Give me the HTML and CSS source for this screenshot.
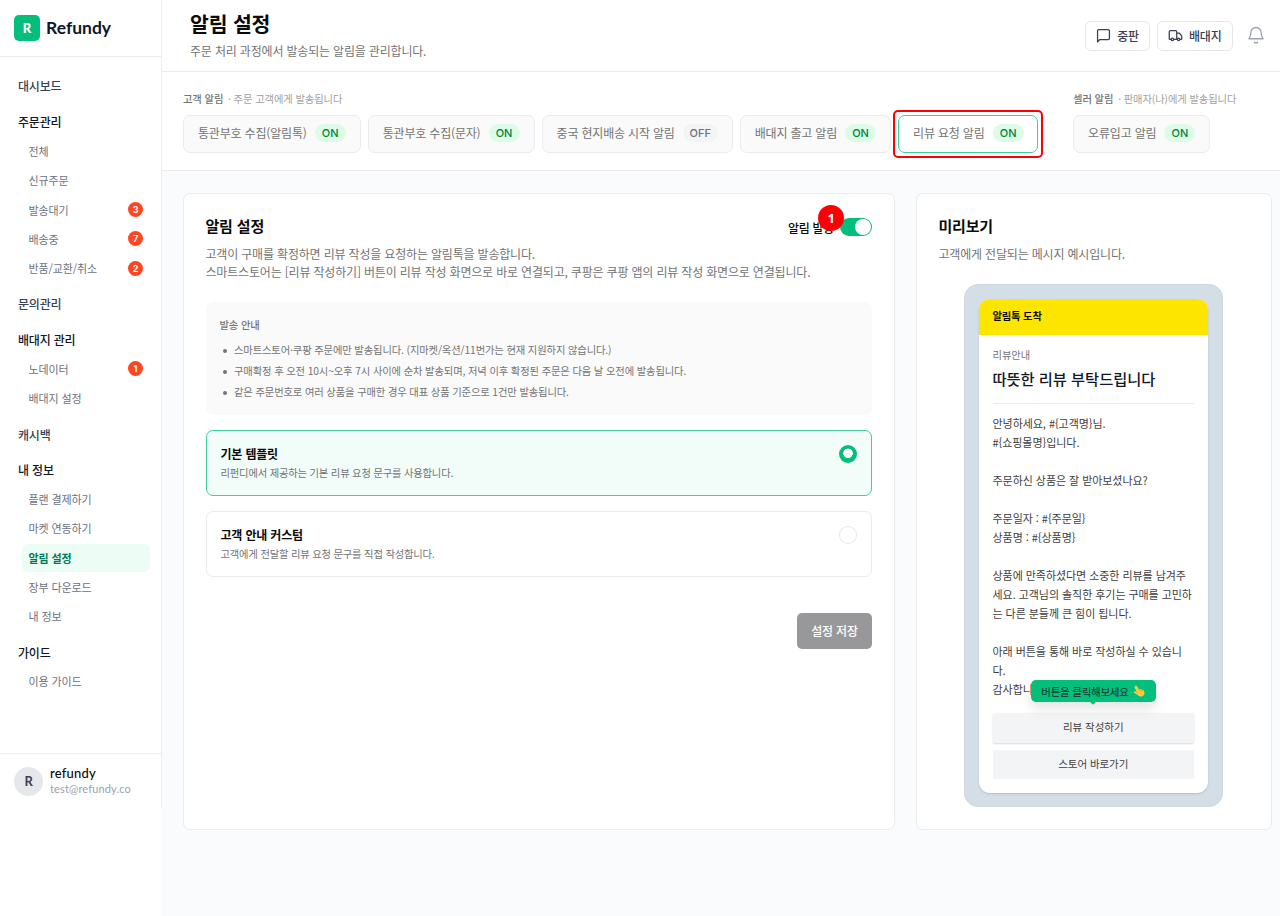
FILE: index.html
```html
<!DOCTYPE html>
<html lang="ko">

<head>
	<meta charset="UTF-8">
	<title>Refundy - 알림 설정</title>
	<link rel="stylesheet" href="styles.css">
</head>

<body>
	<aside class="sidebar">
		<div class="brand">
			<span class="brand-mark">R</span>
			<span class="brand-name">Refundy</span>
		</div>
		<nav class="menu">
			<a class="menu-title light">대시보드</a>
			<a class="menu-title">주문관리</a>
			<a class="menu-item">전체</a>
			<a class="menu-item">신규주문</a>
			<a class="menu-item">발송대기 <span class="count">3</span></a>
			<a class="menu-item">배송중 <span class="count">7</span></a>
			<a class="menu-item">반품/교환/취소 <span class="count">2</span></a>
			<a class="menu-title light">문의관리</a>
			<a class="menu-title">배대지 관리</a>
			<a class="menu-item">노데이터 <span class="count">1</span></a>
			<a class="menu-item">배대지 설정</a>
			<a class="menu-title light">캐시백</a>
			<a class="menu-title">내 정보</a>
			<a class="menu-item">플랜 결제하기</a>
			<a class="menu-item">마켓 연동하기</a>
			<a class="menu-item active">알림 설정</a>
			<a class="menu-item">장부 다운로드</a>
			<a class="menu-item">내 정보</a>
			<a class="menu-title">가이드</a>
			<a class="menu-item">이용 가이드</a>
		</nav>
		<div class="user">
			<span class="avatar">R</span>
			<div>
				<div class="user-name">refundy</div>
				<div class="user-mail">test@refundy.co</div>
			</div>
		</div>
	</aside>

	<main class="main">
		<header class="header">
			<div>
				<h1>알림 설정</h1>
				<p>주문 처리 과정에서 발송되는 알림을 관리합니다.</p>
			</div>
			<div class="actions">
				<button class="btn">
					<svg width="15" height="15" viewBox="0 0 24 24" fill="none" stroke="currentColor" stroke-width="2" stroke-linecap="round" stroke-linejoin="round"><path d="M2.5 22V4.5a2 2 0 0 1 2-2h15a2 2 0 0 1 2 2v12a2 2 0 0 1-2 2H6z"/></svg>
					중판
				</button>
				<button class="btn">
					<svg width="15" height="15" viewBox="0 0 24 24" fill="none" stroke="currentColor" stroke-width="2" stroke-linecap="round" stroke-linejoin="round"><path d="M14 18V6a2 2 0 0 0-2-2H4a2 2 0 0 0-2 2v11a1 1 0 0 0 1 1h2"/><path d="M15 18H9"/><path d="M19 18h2a1 1 0 0 0 1-1v-3.65a1 1 0 0 0-.22-.624l-3.48-4.35A1 1 0 0 0 17.52 8H14"/><circle cx="17" cy="18" r="2"/><circle cx="7" cy="18" r="2"/></svg>
					배대지
				</button>
				<svg class="bell" width="18" height="18" viewBox="0 0 24 24" fill="none" stroke="currentColor" stroke-width="1.7" stroke-linecap="round" stroke-linejoin="round"><path d="M12 2a6.800 6.800 0 0 0-6.800 6.800c0 5-1.200 6.700-2.700 8.200h19c-1.500-1.500-2.700-3.200-2.700-8.200A6.800 6.800 0 0 0 12 2z"/><path d="M10 21.500a2.200 2.200 0 0 0 4 0"/></svg>
			</div>
		</header>

		<section class="tabs">
			<div class="tab-group">
				<div class="tab-label"><b>고객 알림</b> · 주문 고객에게 발송됩니다</div>
				<div class="tab-row">
					<div class="tab">통관부호 수집(알림톡) <span class="state">ON</span></div>
					<div class="tab">통관부호 수집(문자) <span class="state">ON</span></div>
					<div class="tab">중국 현지배송 시작 알림 <span class="state off">OFF</span></div>
					<div class="tab">배대지 출고 알림 <span class="state">ON</span></div>
					<div class="tab selected">리뷰 요청 알림 <span class="state">ON</span></div>
				</div>
			</div>
			<div class="tab-group">
				<div class="tab-label"><b>셀러 알림</b> · 판매자(나)에게 발송됩니다</div>
				<div class="tab-row">
					<div class="tab">오류입고 알림 <span class="state">ON</span></div>
				</div>
			</div>
		</section>

		<div class="content">
			<section class="card settings">
				<div class="card-head">
					<h2>알림 설정</h2>
					<div class="send">
						알림 발송
						<span class="toggle"></span>
						<span class="step">1</span>
					</div>
				</div>
				<p class="desc">고객이 구매를 확정하면 리뷰 작성을 요청하는 알림톡을 발송합니다.<br>스마트스토어는 [리뷰 작성하기] 버튼이 리뷰 작성 화면으로 바로 연결되고, 쿠팡은 쿠팡 앱의 리뷰 작성 화면으로 연결됩니다.</p>

				<div class="notice">
					<h3>발송 안내</h3>
					<ul>
						<li>스마트스토어·쿠팡 주문에만 발송됩니다. (지마켓/옥션/11번가는 현재 지원하지 않습니다.)</li>
						<li>구매확정 후 오전 10시~오후 7시 사이에 순차 발송되며, 저녁 이후 확정된 주문은 다음 날 오전에 발송됩니다.</li>
						<li>같은 주문번호로 여러 상품을 구매한 경우 대표 상품 기준으로 1건만 발송됩니다.</li>
					</ul>
				</div>

				<div class="option checked">
					<div>
						<h4>기본 템플릿</h4>
						<p>리펀디에서 제공하는 기본 리뷰 요청 문구를 사용합니다.</p>
					</div>
					<span class="radio"></span>
				</div>
				<div class="option">
					<div>
						<h4>고객 안내 커스텀</h4>
						<p>고객에게 전달할 리뷰 요청 문구를 직접 작성합니다.</p>
					</div>
					<span class="radio"></span>
				</div>

				<button class="save">설정 저장</button>
			</section>

			<section class="card preview">
				<h2>미리보기</h2>
				<p class="desc">고객에게 전달되는 메시지 예시입니다.</p>
				<div class="phone">
					<div class="message">
						<div class="message-head">알림톡 도착</div>
						<div class="message-body">
							<div class="message-kind">리뷰안내</div>
							<div class="message-title">따뜻한 리뷰 부탁드립니다</div>
							<div class="message-text">안녕하세요, #{고객명}님.<br>#{쇼핑몰명}입니다.<br><br>주문하신 상품은 잘 받아보셨나요?<br><br>주문일자 : #{주문일}<br>상품명 : #{상품명}<br><br>상품에 만족하셨다면 소중한 리뷰를 남겨주<br>세요. 고객님의 솔직한 후기는 구매를 고민하<br>는 다른 분들께 큰 힘이 됩니다.<br><br>아래 버튼을 통해 바로 작성하실 수 있습니<br>다.<br>감사합니다.</div>
							<div class="message-btn raised">
								리뷰 작성하기
								<div class="tip">
									버튼을 클릭해보세요
									<svg width="12" height="12" viewBox="0 0 24 24"><path fill="#ffc83d" d="M4.500 2.200c1.300-1 2.900-.5 3.700.8l3.500 5.600c1.200-.9 2.700-.6 3.500.5 1.300-.8 2.700-.4 3.400.8 1.300-.5 2.600.1 3.100 1.300l1 3.700c.8 3.200-.8 6.200-3.700 7.500-3.200 1.400-6.300.8-8.300-1.300-2-1.600-4.800-3.800-7.800-5.100-2-1-1.500-3.600.8-3.700 1.200 0 2.400.4 3.500.9L3.700 5.800c-.8-1.300-.5-2.800.8-3.600z"/><path fill="none" stroke="#e58b1f" stroke-width="1.300" stroke-linecap="round" d="M11.700 8.600l1.800 3M15.200 9.100l1.600 2.900M18.600 9.900l1.300 2.500M7.200 13.200l1.900 3"/></svg>
								</div>
							</div>
							<div class="message-btn">스토어 바로가기</div>
						</div>
					</div>
				</div>
			</section>
		</div>
	</main>
</body>

</html>
```
FILE: styles.css
```css
* {
	box-sizing: border-box;
}

body {
	margin: 0;
	height: 916px;
	display: flex;
	overflow: hidden;
	background-color: #fff;
	color: #0a0a0a;
	font-family: "Noto Sans CJK KR", sans-serif;
	font-size: 12px;
	letter-spacing: -0.18px;
	white-space: nowrap;
}

h1, h2, h3, h4, p, ul {
	margin: 0;
	padding: 0;
}

/* sidebar */
.sidebar {
	width: 162px;
	height: 808px;
	flex-shrink: 0;
	display: flex;
	flex-direction: column;
	border-right: 1px solid #ebedef;
}

.brand {
	height: 57px;
	flex-shrink: 0;
	padding-left: 14px;
	display: flex;
	align-items: center;
	gap: 6px;
	border-bottom: 1px solid #e9ebee;
}

.brand-mark {
	width: 26px;
	height: 26px;
	border-radius: 5px;
	background-color: #04bf7b;
	color: #fff;
	font: 900 13px/26px Lato, sans-serif;
	text-align: center;
}

.brand-name {
	font: 700 17.500px/24px Lato, sans-serif;
	letter-spacing: 0;
	color: #0f172a;
}

.menu {
	flex: 1;
	padding: 7.700px 11px 0 18px;
}

.menu-title,
.menu-item {
	display: flex;
	align-items: center;
	height: 29.250px;
}

.menu-title {
	margin-top: 6.600px;
	font-weight: 500;
	color: #101828;
}

.menu-title.light {
	color: #364153;
}

.menu-item {
	justify-content: space-between;
	margin-left: 3.500px;
	padding: 0 7px;
	font-size: 11px;
	letter-spacing: -0.1px;
	color: #6a7282;
}

.menu-item.active {
	height: 28px;
	margin-top: .6px;
	margin-bottom: .7px;
	border-radius: 6px;
	background-color: #ecfdf5;
	color: #007a55;
	font-weight: 700;
}

.count {
	width: 15px;
	height: 15px;
	border-radius: 50%;
	background-color: #ff4521;
	color: #fff;
	font: 700 9px/15px "Inter", sans-serif;
	text-align: center;
}

.user {
	height: 55px;
	padding-left: 14px;
	display: flex;
	align-items: center;
	gap: 7px;
	border-top: 1px solid #e9ebee;
}

.avatar {
	width: 29px;
	height: 29px;
	border-radius: 50%;
	background-color: #e5e7eb;
	color: #364153;
	font: 700 13px/29px Lato, sans-serif;
	text-align: center;
}

.user-name {
	font: 500 13px/15px Lato, sans-serif;
	letter-spacing: 0.2px;
}

.user-mail {
	font: 400 11px/15px Lato, sans-serif;
	letter-spacing: 0.15px;
	color: #99a1af;
}

/* header */
.main {
	flex: 1;
	min-width: 0;
	background-color: #fafbfc;
}

.header {
	height: 72px;
	padding: 0 15.500px 0 28px;
	display: flex;
	justify-content: space-between;
	background-color: #fff;
	border-bottom: 1px solid #e9ebee;
}

.header h1 {
	margin-top: 8px;
	font-size: 20.500px;
	line-height: 30px;
	font-weight: 700;
}

.header p {
	margin-top: 4px;
	line-height: 18px;
	color: #737373;
}

.actions {
	display: flex;
	align-items: center;
	gap: 7px;
}

.btn {
	height: 30px;
	padding: 0 10px;
	display: flex;
	align-items: center;
	gap: 6px;
	border: 1px solid #e5e7eb;
	border-radius: 6px;
	background-color: #fff;
	color: #364153;
	font: 500 12px "Noto Sans CJK KR", sans-serif;
	letter-spacing: -0.18px;
}

.bell {
	margin: 0 0 2px 7px;
	color: #99a1af;
}

/* tabs */
.tabs {
	height: 99px;
	padding: 19px 0 0 21px;
	display: flex;
	gap: 35px;
	background-color: #fff;
	border-bottom: 1px solid #e9ebee;
}

.tab-label {
	height: 24px;
	font-size: 10.300px;
	letter-spacing: -0.1px;
	line-height: 16px;
	color: #a1a1a1;
}

.tab-label b {
	margin-right: 2px;
	font-weight: 500;
	color: #737373;
}

.tab-row {
	display: flex;
	gap: 7px;
}

.tab {
	position: relative;
	height: 37.500px;
	padding: 0 14px 2px;
	display: flex;
	align-items: center;
	gap: 8px;
	border: 1px solid #e9ebee;
	border-radius: 7px;
	background-color: #fafafa;
	color: #737373;
}

.state {
	width: 31px;
	height: 18px;
	border-radius: 9px;
	background-color: #dcfce7;
	color: #00803c;
	font: 500 11px/18px "Inter", sans-serif;
	letter-spacing: 0;
	text-align: center;
}

.state.off {
	width: 35px;
	background-color: #f3f4f6;
	color: #6a7282;
}

.tab.selected {
	padding-right: 13.500px;
	border-color: #3fcf9b;
	background-color: #fff;
}

/* callout frame round the selected tab */
.tab.selected::after {
	content: "";
	position: absolute;
	inset: -6px;
	border: 2px solid #fb0007;
	border-radius: 5px;
}

/* cards */
.content {
	padding: 22px 8px 0 21px;
	display: grid;
	grid-template-columns: 712px 356px;
	gap: 21px;
}

.card {
	height: 637px;
	padding: 20px 22px 21px 21.500px;
	border: 1px solid #e9ebee;
	border-radius: 7px;
	background-color: #fff;
}

.card h2 {
	font-size: 15px;
	line-height: 24px;
	font-weight: 700;
}

.card-head {
	display: flex;
	justify-content: space-between;
}

.send {
	position: relative;
	top: 1px;
	display: flex;
	align-items: center;
	gap: 6px;
	font-weight: 500;
	letter-spacing: -0.3px;
}

.toggle {
	width: 32px;
	height: 18px;
	padding: 1px;
	border-radius: 9px;
	background-color: #04bf7b;
}

.toggle::after {
	content: "";
	display: block;
	width: 16px;
	height: 16px;
	margin-left: auto;
	border-radius: 50%;
	background-color: #fff;
}

.step {
	position: absolute;
	top: -10px;
	right: 28px;
	width: 26px;
	height: 26px;
	border-radius: 50%;
	background-color: #fb0007;
	color: #fff;
	font: 700 13px/26px "Open Sans", sans-serif;
	text-align: center;
}

.desc {
	margin-top: 7px;
	line-height: 18px;
	color: #737373;
}

.notice {
	height: 113px;
	margin-top: 21px;
	padding: 14px;
	border-radius: 7px;
	background-color: #fafafa;
	font-size: 10.300px;
	color: #737373;
	letter-spacing: -0.13px;
}

.notice h3 {
	font-size: 10.300px;
	font-weight: 500;
	line-height: 17px;
}

.notice ul {
	margin-top: 6px;
	list-style: none;
}

.notice li {
	display: flex;
	align-items: center;
	gap: 7.500px;
	line-height: 21.200px;
}

.notice li::before {
	content: "";
	width: 4px;
	height: 4px;
	margin: 2px 0 0 3px;
	border-radius: 50%;
	background-color: #737373;
}

.option {
	height: 66px;
	margin-top: 15px;
	padding: 14px;
	display: flex;
	justify-content: space-between;
	border: 1px solid #e9ebee;
	border-radius: 7px;
}

.option h4 {
	font-size: 12px;
	font-weight: 700;
	line-height: 18px;
}

.option p {
	margin-top: 2px;
	font-size: 10.300px;
	line-height: 16px;
	color: #737373;
}

.option.checked {
	border-color: #3fcf9b;
	background-color: #f2fcf8;
}

.radio {
	width: 18px;
	height: 18px;
	border: 1px solid #e5e7eb;
	border-radius: 50%;
}

.checked .radio {
	border: none;
	background: radial-gradient(circle at 50% 46%, #fff 4.500px, #04bf7b 5px);
}

.save {
	display: block;
	width: 75px;
	height: 36px;
	margin: 36px 0 0 auto;
	padding: 0 0 2px;
	border: none;
	border-radius: 5px;
	background-color: #98989b;
	color: #fff;
	font: 500 12px "Noto Sans CJK KR", sans-serif;
	letter-spacing: -0.18px;
}

/* message preview */
.phone {
	width: 259px;
	height: 523px;
	margin: 21px 26px 0 auto;
	padding: 14px;
	border: 1px solid #cbd6e0;
	border-radius: 14px;
	background-color: #d4dee7;
}

.message {
	height: 494px;
	border-radius: 11px;
	background-color: #fff;
	box-shadow: 0 1px 2px rgba(0, 0, 0, 0.15);
	letter-spacing: -0.05px;
}

.message-head {
	height: 36px;
	padding-left: 13.500px;
	border-radius: 11px 11px 0 0;
	background-color: #fee500;
	font-size: 10.300px;
	letter-spacing: -0.18px;
	font-weight: 700;
	line-height: 33px;
}

.message-body {
	padding: 11px 14px 0 13.500px;
}

.message-kind {
	font-size: 10.300px;
	line-height: 18px;
	color: #737373;
}

.message-title {
	height: 40px;
	padding-top: 2px;
	border-bottom: 1px solid #e9ebee;
	font-size: 15.300px;
	font-weight: 500;
	line-height: 24px;
	color: #101828;
}

.message-text {
	margin-top: 10px;
	font-size: 11px;
	line-height: 19px;
	color: #404040;
}

.message-btn {
	position: relative;
	height: 29px;
	margin-top: 7px;
	background-color: #f3f4f6;
	color: #404040;
	font-size: 10.500px;
	line-height: 27px;
	text-align: center;
}

.message-btn.raised {
	height: 30px;
	margin-top: 14px;
	border-radius: 2px;
	box-shadow: 0 1px 2px rgba(0, 0, 0, 0.15);
	line-height: 28px;
}

.tip {
	position: absolute;
	left: 38px;
	top: -33px;
	width: 125px;
	height: 22px;
	display: flex;
	align-items: center;
	justify-content: center;
	gap: 4px;
	border-radius: 5px;
	background-color: #04bf7b;
	color: #182e2b;
	box-shadow: 0 7px 12px rgba(0, 0, 0, 0.1);
	line-height: 19px;
	letter-spacing: -0.25px;
}

.tip::after {
	content: "";
	position: absolute;
	left: 60px;
	bottom: -2px;
	width: 4px;
	height: 4px;
	background-color: #04bf7b;
	transform: rotate(45deg);
}
```
